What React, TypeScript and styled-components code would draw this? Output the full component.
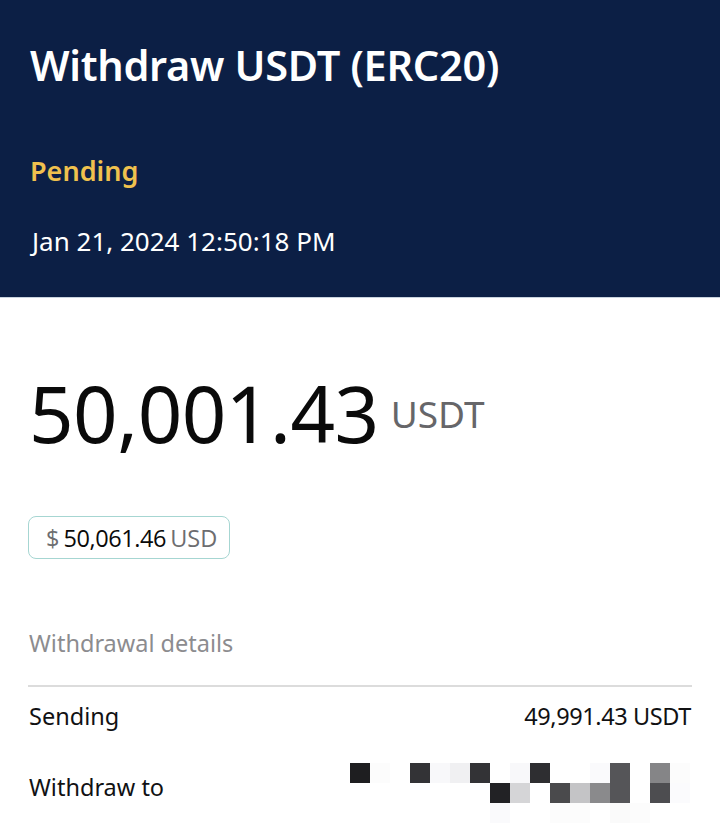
import React from "react";
import styled, { createGlobalStyle } from "styled-components";

const GlobalStyle = createGlobalStyle`
  html, body { margin: 0; padding: 0; background: #ffffff; }
  body { font-family: "Noto Sans", "Open Sans", sans-serif; }
  * { box-sizing: border-box; }
`;

const Page = styled.div`
  width: 720px;
  min-height: 828px;
  background: #ffffff;
  overflow: hidden;
`;

const Header = styled.header`
  background: #0c1f45;
  height: 298px;
  padding: 35px 30px 0 30px;
  display: flex;
  flex-direction: column;
  border-bottom: 1px solid #c9d3de;
`;

const Title = styled.h1`
  margin: 0;
  font-size: 41.5px;
  line-height: 60px;
  font-weight: 600;
  color: #ffffff;
  letter-spacing: -0.3px;
`;

const Status = styled.div`
  margin-top: 58px;
  font-size: 27px;
  line-height: 36px;
  font-weight: 600;
  color: #f0c14e;
`;

const DateText = styled.div`
  margin-top: 34px;
  padding-left: 2px;
  font-size: 26px;
  line-height: 36px;
  font-weight: 400;
  color: #ffffff;
`;

const Main = styled.main`
  padding: 70px 29px 0 29px;
  display: flex;
  flex-direction: column;
`;

const AmountRow = styled.div`
  display: flex;
  align-items: center;
  gap: 12px;
  height: 90px;
`;

const BigNumber = styled.span`
  font-size: 78px;
  line-height: 90px;
  color: #0a0a0a;
  letter-spacing: -0.5px;
`;

const Unit = styled.span`
  font-size: 37px;
  line-height: 40px;
  color: #666669;
  margin-top: 2px;
`;

const Badge = styled.div`
  align-self: flex-start;
  margin-top: 58px;
  margin-left: -1px;
  height: 43px;
  padding: 0 12px 0 17px;
  display: flex;
  align-items: center;
  gap: 4px;
  border: 1px solid #a6d6d2;
  border-radius: 8px;
  font-size: 23.5px;
  font-family: "Open Sans", "Noto Sans", sans-serif;
`;

const Muted = styled.span`
  color: #6d6d70;
`;

const Strong = styled.span`
  color: #0a0a0a;
  letter-spacing: -0.4px;
`;

const SectionLabel = styled.div`
  margin-top: 69px;
  font-size: 23.5px;
  line-height: 30px;
  color: #8c8c8f;
`;

const Divider = styled.hr`
  margin: 27px 0 0 -1px;
  border: 0;
  height: 2px;
  background: #dcdcdc;
  width: 664px;
`;

const DetailRow = styled.div<{ $height: number }>`
  display: flex;
  justify-content: space-between;
  align-items: center;
  height: ${(p) => p.$height}px;
  width: 662px;
  font-size: 23.5px;
  color: #111113;
`;

const Value = styled.span`
  letter-spacing: -0.4px;
`;

const Mosaic = styled.div`
  display: grid;
  grid-template-columns: repeat(17, 20px);
  grid-auto-rows: 20px;
  margin-top: 12px;
  margin-right: 1px;
`;

const Cell = styled.div<{ $c: string }>`
  background: ${(p) => p.$c};
`;

const W = "#ffffff";
const mosaic: string[][] = [
  ["#1e1e20", "#fcfcfc", W, "#333336", "#f8f8fa", "#f0f0f2", "#333336", W, "#f8f8fa", "#2e2e31", W, W, "#fafafc", "#555558", W, "#858587", "#fcfcfc"],
  [W, W, W, W, W, W, W, "#222225", "#d5d5d7", W, "#4a4a4c", "#c4c4c6", "#8a8a8c", "#555558", W, "#4d4d50", "#fbfbfd"],
  [W, W, W, W, W, W, W, "#fafafc", W, W, "#fcfcfc", "#fcfcfc", W, "#fafafa", "#fcfcfc", W, W],
];

export default function App() {
  return (
    <Page>
      <GlobalStyle />
      <Header>
        <Title>Withdraw USDT (ERC20)</Title>
        <Status>Pending</Status>
        <DateText>Jan 21, 2024 12:50:18 PM</DateText>
      </Header>
      <Main>
        <AmountRow>
          <BigNumber>50,001.43</BigNumber>
          <Unit>USDT</Unit>
        </AmountRow>
        <Badge>
          <Muted>$</Muted>
          <Strong>50,061.46</Strong>
          <Muted>USD</Muted>
        </Badge>
        <SectionLabel>Withdrawal details</SectionLabel>
        <Divider />
        <DetailRow $height={58}>
          <span>Sending</span>
          <Value>49,991.43 USDT</Value>
        </DetailRow>
        <DetailRow $height={84}>
          <span>Withdraw to</span>
          <Mosaic>
            {mosaic.flatMap((row, r) =>
              row.map((c, i) => <Cell key={`${r}-${i}`} $c={c} />)
            )}
          </Mosaic>
        </DetailRow>
      </Main>
    </Page>
  );
}
